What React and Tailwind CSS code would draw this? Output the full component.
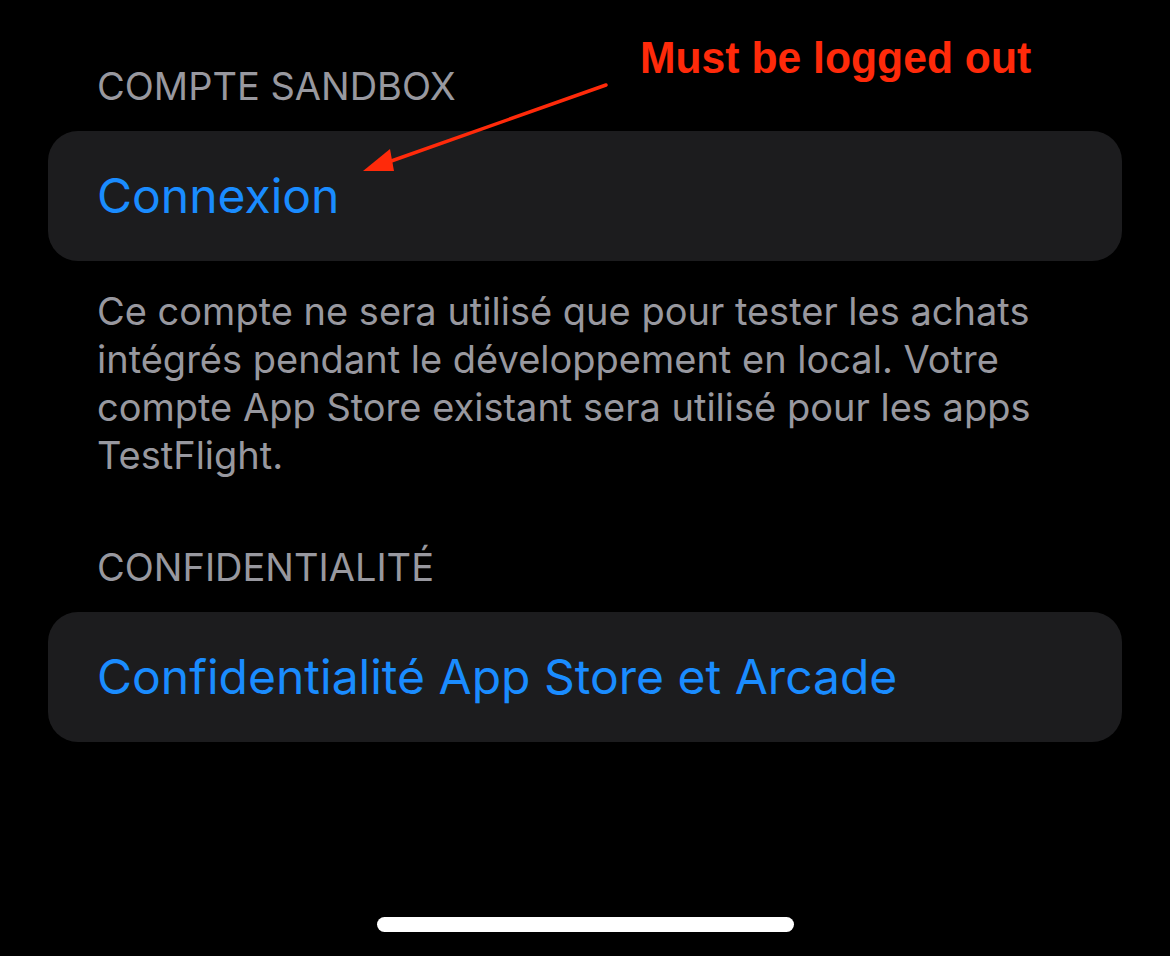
export default function App() {
  return (
    <div
      className="relative flex flex-col h-[956px] w-[1170px] overflow-hidden bg-black"
      style={{ fontFamily: "Inter, 'Noto Sans', sans-serif" }}
    >
      <div className="flex flex-col px-[48px] pt-[62px]">
        {/* Compte sandbox */}
        <div className="px-[49px] text-[38px] leading-[48px] text-[#98989f]">
          COMPTE SANDBOX
        </div>
        <div className="mt-[21px] flex h-[130px] items-center rounded-[30px] bg-[#1c1c1e] px-[49px]">
          <span className="text-[48px] text-[#1a8cff]">Connexion</span>
        </div>
        <p className="mt-[26px] px-[49px] text-[38px] leading-[48px] text-[#98989f]">
          Ce compte ne sera utilisé que pour tester les achats intégrés pendant le développement en local. Votre compte App Store existant sera utilisé pour les apps TestFlight.
        </p>

        {/* Confidentialité */}
        <div className="mt-[64px] px-[49px] text-[38px] leading-[48px] text-[#98989f]">
          CONFIDENTIALITÉ
        </div>
        <div className="mt-[21px] flex h-[130px] items-center rounded-[30px] bg-[#1c1c1e] px-[49px]">
          <span className="text-[48px] text-[#1a8cff]">Confidentialité App Store et Arcade</span>
        </div>
      </div>

      <div className="mt-auto mb-[24px] flex justify-center">
        <div className="h-[15px] w-[417px] rounded-full bg-white" />
      </div>

      {/* annotation */}
      <div
        className="absolute left-[640px] top-[25px] origin-left scale-x-[0.97] text-[44px] font-bold text-[#ff2a0a]"
        style={{ fontFamily: "'Liberation Sans Narrow', 'Arial Narrow', 'Liberation Sans', sans-serif" }}
      >
        Must be logged out
      </div>
      <svg className="absolute left-0 top-0" width="1170" height="956" viewBox="0 0 1170 956">
        <line x1="606" y1="85" x2="380" y2="165" stroke="#ff2a0a" strokeWidth="3.5" strokeLinecap="round" />
        <polygon points="363,171 390,149 394,171" fill="#ff2a0a" />
      </svg>
    </div>
  );
}
